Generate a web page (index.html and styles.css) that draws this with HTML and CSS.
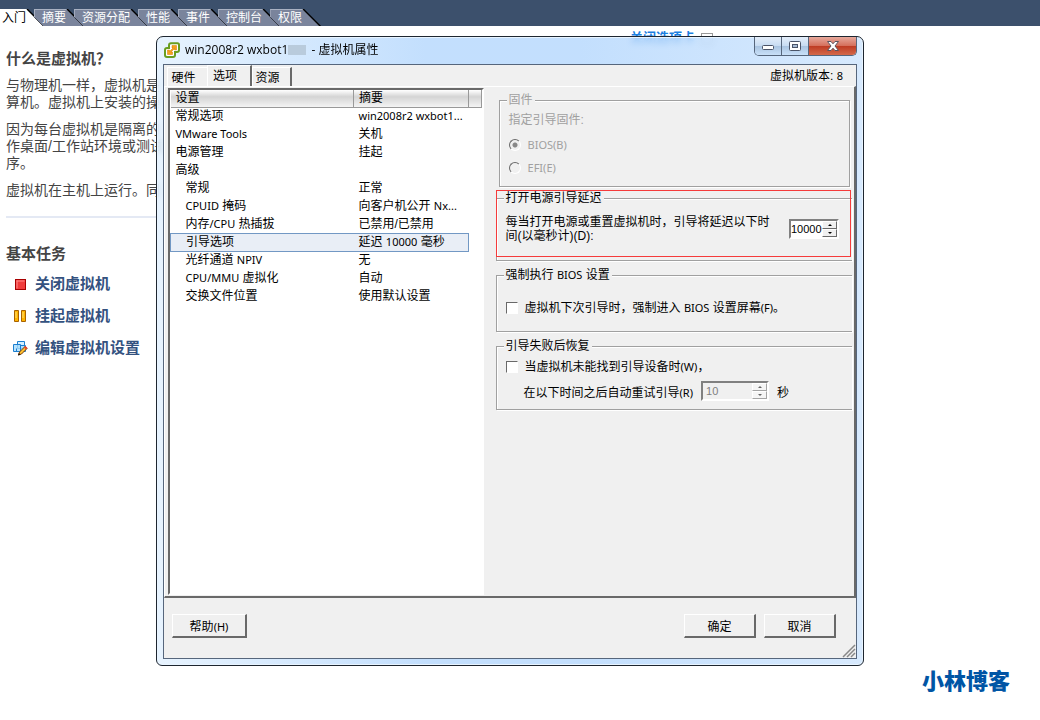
FILE: index.html
```html
<!DOCTYPE html>
<html lang="zh-CN">
<head>
    <meta charset="UTF-8">
    <meta name="viewport" content="width=device-width, initial-scale=1.0">
    <title>虚拟机属性</title>
    <link rel="stylesheet" href="styles.css">
</head>
<body>
    <!-- 顶部标签 -->
    <nav class="top-tabs">
        <a href="#" class="top-tab active"><span>入门</span></a>
        <a href="#" class="top-tab"><span>摘要</span></a>
        <a href="#" class="top-tab"><span>资源分配</span></a>
        <a href="#" class="top-tab"><span>性能</span></a>
        <a href="#" class="top-tab"><span>事件</span></a>
        <a href="#" class="top-tab"><span>控制台</span></a>
        <a href="#" class="top-tab"><span>权限</span></a>
    </nav>

    <main class="page">
        <a href="#" class="close-tab">关闭选项卡 <span class="close-box"></span></a>

        <section class="intro">
            <h2>什么是虚拟机？</h2>
            <p>与物理机一样，虚拟机是<br>算机。虚拟机上安装的操</p>
            <p>因为每台虚拟机是隔离的<br>作桌面/工作站环境或测试<br>序。</p>
            <p>虚拟机在主机上运行。同</p>
        </section>

        <section class="tasks">
            <h2>基本任务</h2>
            <ul>
                <li>
                    <svg width="16" height="16" viewBox="0 0 16 16"><rect x="3.500" y="3.500" width="10" height="10" fill="#f03c3c" stroke="#a80000"/><path d="M4.500 5h8M5 4.500v8" stroke="#ff8a8a"/></svg>
                    <a href="#">关闭虚拟机</a>
                </li>
                <li>
                    <svg width="16" height="16" viewBox="0 0 16 16"><path d="M2.500 2.500h4v11h-4zM9.500 2.500h4v11h-4z" fill="#ffb400" stroke="#a86200"/><path d="M4 4v6M11 4v6" stroke="#ffe27a"/></svg>
                    <a href="#">挂起虚拟机</a>
                </li>
                <li>
                    <svg width="16" height="16" viewBox="0 0 16 16"><path d="M5.500 1.500h7v7h-7z" fill="#d4efff" stroke="#1c7fd0"/><path d="M1.500 4.500h7v7h-7zM8.500 5.500h5v6h-9v-3" fill="#a5dbfb" fill-opacity=".8" stroke="#1c7fd0"/><path d="M6.500 15l1-3 5.500-5.500 2 2-5.500 5.500z" fill="#ffc02e" stroke="#7a3a00"/><path d="M12.700 6.700l2 2" stroke="#e8402a" stroke-width="2"/><path d="M6 15.500l.8-2.500 1.700 1.500z" fill="#111"/></svg>
                    <a href="#">编辑虚拟机设置</a>
                </li>
            </ul>
        </section>
    </main>

    <!-- 虚拟机属性窗口 -->
    <div class="window" role="dialog" aria-labelledby="window-title">
        <div class="title-bar">
            <svg class="app-icon" width="16" height="16" viewBox="0 0 16 16"><path d="M7 1.200h6.500q1.500 0 1.500 1.500v5.300q0 2-2 2h-2v3q0 2-2 2h-6q-2 0-2-2v-5q0-2 2-2h2v-2.800q0-2 2-2z" fill="#fff" stroke="#6a9e1f" stroke-width="2"/><path d="M8 3.500h4.500v4.500h-2v-1.500l-3.500 3.500h1.500v2.500h-5v-4.500h2v1.500l3.500-3.500h-1z" fill="#f5a01c" stroke="#d57a00" stroke-width=".5"/></svg>
            <h1 id="window-title">win2008r2 wxbot1<span class="smudge"></span> - 虚拟机属性</h1>
            <div class="window-buttons">
                <button class="win-btn" aria-label="最小化"><svg width="12" height="12" viewBox="0 0 12 12"><rect x=".5" y="5.500" width="11" height="4" rx="1" fill="#fff" stroke="#4b5468"/></svg></button>
                <button class="win-btn" aria-label="最大化"><svg width="12" height="12" viewBox="0 0 12 12"><rect x=".5" y="1.500" width="11" height="9" rx="1" fill="#fff" stroke="#4b5468"/><rect x="3.500" y="4.500" width="5" height="3" fill="#a9bdd6" stroke="#4b5468"/></svg></button>
                <button class="win-btn close" aria-label="关闭"><svg width="12" height="12" viewBox="0 0 12 12"><path d="M.5 1.500h3.500l2 2.300 2-2.300h3.500l-3.500 4.500 3.500 4.500h-3.500l-2-2.300-2 2.300h-3.500l3.500-4.500z" fill="#fff" stroke="#5a5560"/></svg></button>
            </div>
        </div>

        <div class="window-body">
            <div class="tab-row">
                <div class="tabs" role="tablist">
                    <button class="tab" role="tab">硬件</button>
                    <button class="tab selected" role="tab" aria-selected="true">选项</button>
                    <button class="tab" role="tab">资源</button>
                </div>
                <div class="version">虚拟机版本: <span class="en">8</span></div>
            </div>

            <div class="panel">
                <div class="list">
                    <table>
                        <colgroup>
                            <col class="col-name">
                            <col class="col-summary">
                            <col>
                        </colgroup>
                        <thead>
                            <tr><th>设置</th><th>摘要</th><th></th></tr>
                        </thead>
                        <tbody>
                            <tr><td>常规选项</td><td><span class="en">win2008r2 wxbot1...</span></td></tr>
                            <tr><td><span class="en">VMware Tools</span></td><td>关机</td></tr>
                            <tr><td>电源管理</td><td>挂起</td></tr>
                            <tr><td>高级</td><td></td></tr>
                            <tr class="sub"><td>常规</td><td>正常</td></tr>
                            <tr class="sub"><td><span class="en">CPUID</span> 掩码</td><td>向客户机公开 <span class="en">Nx...</span></td></tr>
                            <tr class="sub"><td>内存<span class="en">/CPU</span> 热插拔</td><td>已禁用/已禁用</td></tr>
                            <tr class="sub current"><td>引导选项</td><td>延迟 <span class="en">10000</span> 毫秒</td></tr>
                            <tr class="sub"><td>光纤通道 <span class="en">NPIV</span></td><td>无</td></tr>
                            <tr class="sub"><td><span class="en">CPU/MMU</span> 虚拟化</td><td>自动</td></tr>
                            <tr class="sub"><td>交换文件位置</td><td>使用默认设置</td></tr>
                        </tbody>
                    </table>
                </div>

                <form class="options">
                    <fieldset class="group firmware" disabled>
                        <legend>固件</legend>
                        <p>指定引导固件:</p>
                        <label class="choice"><input type="radio" name="firmware" checked><span class="en">BIOS(B)</span></label>
                        <label class="choice"><input type="radio" name="firmware"><span class="en">EFI(E)</span></label>
                    </fieldset>

                    <div class="delay-box">
                        <fieldset class="group open delay">
                            <legend>打开电源引导延迟</legend>
                            <div class="delay-row">
                                <label for="delay">每当打开电源或重置虚拟机时，引导将延迟以下时间(以毫秒计)(D):</label>
                                <div class="spinner">
                                    <input type="text" id="delay" value="10000">
                                    <div class="arrows">
                                        <button type="button" aria-label="增加"><i class="up"></i></button>
                                        <button type="button" aria-label="减少"><i class="down"></i></button>
                                    </div>
                                </div>
                            </div>
                        </fieldset>
                        <div class="highlight"></div>
                    </div>

                    <fieldset class="group open bios">
                        <legend>强制执行 <span class="en">BIOS</span> 设置</legend>
                        <label class="choice"><input type="checkbox"><span>虚拟机下次引导时，强制进入 <span class="en">BIOS</span> 设置屏幕<span class="en">(F)</span>。</span></label>
                    </fieldset>

                    <fieldset class="group open retry">
                        <legend>引导失败后恢复</legend>
                        <label class="choice"><input type="checkbox"><span>当虚拟机未能找到引导设备时<span class="en">(W)</span>，</span></label>
                        <div class="retry-row">
                            <label for="retry">在以下时间之后自动重试引导<span class="en">(R)</span></label>
                            <div class="spinner wide">
                                <input type="text" id="retry" value="10" disabled>
                                <div class="arrows">
                                    <button type="button" aria-label="增加" disabled><i class="up"></i></button>
                                    <button type="button" aria-label="减少" disabled><i class="down"></i></button>
                                </div>
                            </div>
                            <span>秒</span>
                        </div>
                    </fieldset>
                </form>
            </div>

            <div class="footer">
                <button class="btn help">帮助<span class="en">(H)</span></button>
                <button class="btn">确定</button>
                <button class="btn">取消</button>
            </div>
            <svg class="grip" width="14" height="14" viewBox="0 0 14 14"><path d="M1 13L13 1M5 13l8-8M9 13l4-4" stroke="#888" stroke-width="1.500"/></svg>
        </div>
    </div>

    <div class="watermark">小林博客</div>
</body>
</html>
```
FILE: styles.css
```css
* {
    box-sizing: border-box;
}

body {
    margin: 0;
    min-height: 100vh;
    overflow: hidden;
    background-color: #fff;
    color: #000;
    font-family: "Liberation Sans", "Noto Sans CJK SC", sans-serif;
    font-size: 12px;
}

button, input {
    font-family: inherit;
    font-size: 12px;
    color: inherit;
    margin: 0;
    padding: 0;
}

h1, h2, p, ul, fieldset {
    margin: 0;
    padding: 0;
}

.en {
    font-family: "Noto Sans", sans-serif;
    font-size: 11px;
}

/* Top tabs */
.top-tabs {
    display: flex;
    align-items: flex-end;
    height: 26px;
    background-color: #3c506c;
}

.top-tab {
    height: 17px;
    margin-right: -11px;
    padding-right: 2px;
    background-color: #000;
    clip-path: polygon(0 0, calc(100% - 17px) 0, 100% 100%, 9px 100%, 0 8px);
    color: #fff;
    line-height: 16px;
    text-decoration: none;
}

.top-tab span {
    display: block;
    height: 17px;
    padding: 0 17px 0 7px;
    background-color: #7a849c;
    border-top: 1px solid #a9b1c2;
    border-left: 1px solid #a9b1c2;
    clip-path: polygon(0 0, calc(100% - 17px) 0, 100% 100%, 9px 100%, 0 8px);
}

.top-tab.active {
    color: #000;
    clip-path: polygon(0 0, calc(100% - 17px) 0, 100% 100%, 0 100%);
}

.top-tab.active span {
    padding-left: 1px;
    background-color: #fff;
    border-color: #fff;
    clip-path: polygon(0 0, calc(100% - 17px) 0, 100% 100%, 0 100%);
}

/* Page */
.page {
    position: relative;
    padding: 23px 6px;
    color: #444;
}

.close-tab {
    position: absolute;
    top: 3px;
    left: 630px;
    display: flex;
    gap: 6px;
    color: #1c7fe0;
    font-size: 13px;
    font-weight: bold;
    line-height: 18px;
    text-decoration: none;
}

.close-box {
    width: 12px;
    height: 12px;
    margin-top: 4px;
    border: 1px solid #999;
}

.page h2 {
    font-size: 15px;
    line-height: 20px;
}

.intro {
    max-width: 50%;
    padding-bottom: 17px;
    border-bottom: 2px solid #e4e9f4;
    font-size: 14px;
    line-height: 17px;
    white-space: nowrap;
}

.intro p {
    margin-top: 10px;
}

.intro h2 + p {
    margin-top: 8px;
}

.tasks {
    padding-top: 26px;
}

.tasks ul {
    padding-top: 2px;
    list-style: none;
}

.tasks li {
    display: flex;
    align-items: center;
    gap: 7px;
    height: 32px;
    padding-left: 6px;
}

.tasks svg {
    margin-top: 3px;
}

.tasks a {
    color: #34527f;
    font-size: 15px;
    font-weight: bold;
    text-decoration: none;
}

/* Window */
.window {
    position: absolute;
    inset: 36px 176px 54px 156px;
    display: flex;
    flex-direction: column;
    padding: 0 6px 6px;
    border: 1px solid #1e2630;
    border-radius: 7px 7px 6px 6px;
    background: linear-gradient(90deg, rgba(225, 240, 254, 0.8), rgba(180, 215, 253, 0.8) 38%, rgba(180, 215, 253, 0.8) 60%, rgba(205, 228, 253, 0.8));
    backdrop-filter: blur(3px);
    box-shadow: inset 0 0 0 1px #e8f4ff;
}

.title-bar {
    display: flex;
    height: 27px;
}

.app-icon {
    margin: 5px 5px 0 1px;
}

.title-bar h1 {
    flex: 1;
    font-family: "Open Sans", "Noto Sans CJK SC", sans-serif;
    font-size: 12px;
    font-weight: normal;
    line-height: 25px;
}

.smudge {
    display: inline-block;
    width: 18px;
    height: 10px;
    margin-right: 2px;
    background-color: #b9cbdc;
    vertical-align: -1px;
}

.window-buttons {
    display: flex;
    height: 19px;
    border: 1px solid #56667c;
    border-top: none;
    border-radius: 0 0 5px 5px;
    overflow: hidden;
}

.win-btn {
    display: flex;
    align-items: center;
    justify-content: center;
    width: 27px;
    border: none;
    border-right: 1px solid #56667c;
    background: linear-gradient(#e4eefa, #c8dcf2 48%, #a9c3e0 50%, #c8e0f8);
}

.win-btn.close {
    width: 47px;
    border-right: none;
    background: linear-gradient(#e7a99c, #d5705c 48%, #bd3a22 50%, #d4694a);
}

.window-body {
    position: relative;
    flex: 1;
    display: flex;
    flex-direction: column;
    border: 1px solid #56667c;
    background-color: #f0f0f0;
    min-height: 0;
}

.tab-row {
    display: flex;
    justify-content: space-between;
    align-items: flex-end;
    height: 21px;
    padding: 0 13px 0 3px;
}

.tabs {
    display: flex;
    align-items: flex-end;
}

.tab {
    width: 40px;
    height: 19px;
    padding: 0 8px 1px 0;
    border: 1px solid #fff;
    border-right: 2px solid #696969;
    border-bottom: none;
    background-color: #f0f0f0;
    white-space: nowrap;
}

.tab:first-child {
    border-right: none;
}

.tab.selected {
    width: 45px;
    height: 21px;
    padding-bottom: 3px;
}

.version {
    line-height: 20px;
}

.panel {
    flex: 1;
    display: flex;
    min-height: 0;
    border-top: 1px solid #fff;
    border-left: 1px solid #fff;
    border-right: 2px solid #696969;
    border-bottom: 2px solid #696969;
}

/* Settings list */
.list {
    flex: 0 0 45.8%;
    margin: 1px 0 1px 3px;
    border: 2px solid #fff;
    border-top-color: #696969;
    border-left-color: #696969;
    background-color: #fff;
}

.list table {
    width: 100%;
    border-collapse: collapse;
    table-layout: fixed;
}

.col-name {
    width: 183px;
}

.col-summary {
    width: 115px;
}

.list th {
    height: 17px;
    padding: 0 5px;
    border-right: 1px solid #999;
    border-bottom: 1px solid #999;
    background: linear-gradient(#fff, #d4d4d4 40%, #f4f4f4);
    font-weight: normal;
    line-height: 16px;
    text-align: left;
}

.list td {
    height: 18px;
    padding: 0 5px;
    line-height: 16px;
    white-space: nowrap;
}

.list .sub td:first-child {
    padding-left: 15px;
}

.current td {
    background-color: #e9eef6;
    border-top: 1px solid #7298c4;
    border-bottom: 1px solid #7298c4;
}

.current td:first-child {
    border-left: 1px solid #7298c4;
}

.current td:last-child {
    border-right: 1px solid #7298c4;
}

/* Options */
.options {
    flex: 1;
    min-width: 0;
    padding: 5px 2px 0 12px;
}

.group {
    min-width: 0;
    padding: 0 9px;
    border: 1px solid #a0a0a0;
    box-shadow: 1px 1px 0 #fff, inset 1px 1px 0 #fff;
}

.group legend {
    margin-left: -2px;
    padding: 0 2px;
    background-color: #f0f0f0;
    line-height: 16px;
}

.group.open {
    border-right: none;
}

.choice {
    display: flex;
    align-items: center;
    gap: 7px;
    line-height: 16px;
}

.choice input {
    appearance: none;
    flex: none;
    width: 12px;
    height: 12px;
    border: 1px solid #fff;
    border-top-color: #696969;
    border-left-color: #696969;
    background-color: #fff;
}

.choice input[type="radio"] {
    border-radius: 50%;
    background-color: #f0f0f0;
}

.choice input[type="radio"]:checked {
    background-image: radial-gradient(circle, #888 2px, transparent 3px);
}

.firmware {
    height: 95px;
    margin: 0 2px 0 3px;
    color: #a0a0a0;
}

.firmware p {
    padding: 4px 0 5px;
    line-height: 16px;
}

.firmware .choice {
    height: 23px;
}

.delay-box {
    position: relative;
    margin-top: 3px;
}

.delay {
    height: 71px;
}

.delay-row {
    display: flex;
    align-items: center;
    justify-content: space-between;
    padding: 9px 4px 0 0;
}

.delay-row label {
    flex: none;
    width: 268px;
    line-height: 14px;
}

/* Red frame over the delay group */
.highlight {
    position: absolute;
    inset: 0 1px 4px 0;
    border: 1px solid #f53b3b;
    pointer-events: none;
}

.spinner {
    flex: none;
    display: flex;
    width: 50px;
    height: 20px;
    border: 2px solid #fff;
    border-top-color: #808080;
    border-left-color: #808080;
    background-color: #fff;
}

.spinner.wide {
    width: 68px;
}

.spinner input {
    flex: 1;
    min-width: 0;
    border: none;
    background-color: transparent;
    font-size: 11px;
}

.spinner.wide input {
    padding-left: 3px;
}

.arrows {
    display: flex;
    flex-direction: column;
    width: 15px;
}

.arrows button {
    flex: 1;
    display: flex;
    align-items: center;
    justify-content: center;
    border: 1px solid #fff;
    border-right-color: #696969;
    border-bottom-color: #696969;
    background-color: #f0f0f0;
}

.up, .down {
    border: 2px solid transparent;
}

.up {
    border-top: none;
    border-bottom-color: #000;
}

.down {
    border-bottom: none;
    border-top-color: #000;
}

.spinner input:disabled {
    background-color: #f0f0f0;
    color: #808080;
}

.arrows button:disabled {
    opacity: 0.6;
}

.bios {
    height: 65px;
    margin-top: 6px;
}

.bios .choice {
    padding-top: 17px;
}

.retry {
    height: 72px;
    margin-top: 6px;
}

.retry .choice {
    padding-top: 5px;
}

.retry-row {
    display: flex;
    align-items: center;
    gap: 8px;
    padding: 6px 0 0 18px;
}

/* Footer */
.footer {
    display: flex;
    gap: 8px;
    height: 60px;
    padding: 16px 20px 0 8px;
}

.btn {
    width: 72px;
    height: 24px;
    border: 1px solid #fff;
    border-right: 2px solid #696969;
    border-bottom: 2px solid #696969;
    background-color: #f0f0f0;
}

.btn.help {
    width: 75px;
    margin-right: auto;
}

.grip {
    position: absolute;
    right: 0;
    bottom: 0;
}

.watermark {
    position: absolute;
    right: 30px;
    bottom: 25px;
    color: #0055a5;
    font-size: 22px;
    font-weight: 900;
    line-height: 26px;
}
```
